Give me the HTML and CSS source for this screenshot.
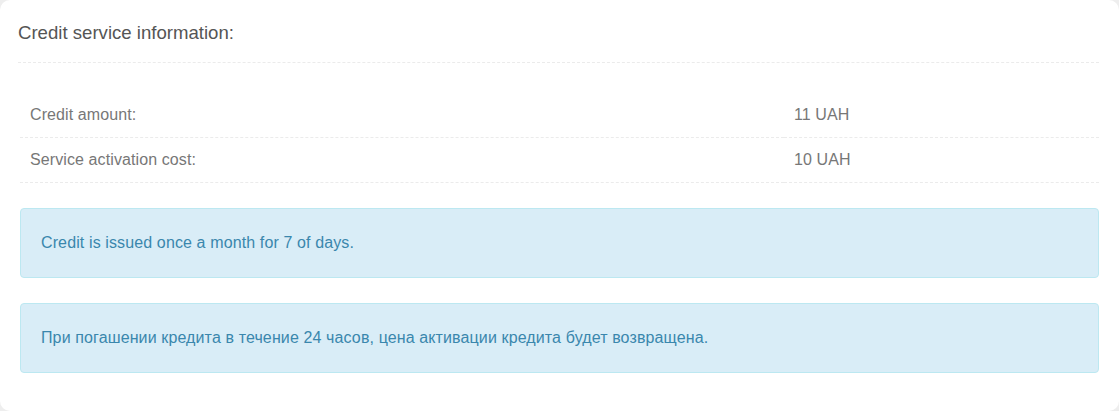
FILE: index.html
```html
<!DOCTYPE html>
<html lang="en">
<head>
    <meta charset="UTF-8">
    <meta name="viewport" content="width=device-width, initial-scale=1.0">
    <title>Credit service information</title>
    <link rel="stylesheet" href="styles.css">
</head>
<body>
    <div class="panel">
        <div class="panel-heading">Credit service information:</div>
        <table class="info-table">
            <tr>
                <td class="label">Credit amount:</td>
                <td>11 UAH</td>
            </tr>
            <tr>
                <td class="label">Service activation cost:</td>
                <td>10 UAH</td>
            </tr>
        </table>
        <div class="alert">Credit is issued once a month for 7 of days.</div>
        <div class="alert">При погашении кредита в течение 24 часов, цена активации кредита будет возвращена.</div>
    </div>
</body>
</html>
```

FILE: styles.css
```css
html, body {
    height: 100%;
}
body {
    font-family: 'Liberation Sans', Arial, sans-serif;
    background-color: #eeeeee;
    margin: 0;
    padding: 0;
}
.panel {
    box-sizing: border-box;
    min-height: 100%;
    background-color: #fff;
    border-radius: 10px;
    padding: 21px 20px 30px 20px;
}
.panel-heading {
    font-size: 18.6px;
    line-height: 24px;
    color: #555;
    padding-bottom: 17px;
    margin-left: -2px;
    border-bottom: 1px dashed #ebebeb;
}
.info-table {
    width: 100%;
    margin-top: 30px;
    border-collapse: collapse;
    table-layout: fixed;
    font-size: 16px;
    letter-spacing: 0.1px;
    color: #777;
}
.info-table td {
    padding: 12px 10px;
    line-height: 20px;
    border-bottom: 1px dashed #ebebeb;
}
.info-table td.label {
    width: 744px;
}
.alert {
    margin-top: 25px;
    padding: 24px 20px;
    line-height: 20px;
    font-size: 16px;
    letter-spacing: 0.12px;
    background-color: #d9edf7;
    border: 1px solid #bce8f1;
    border-radius: 4px;
    color: #3a87ad;
}
```
